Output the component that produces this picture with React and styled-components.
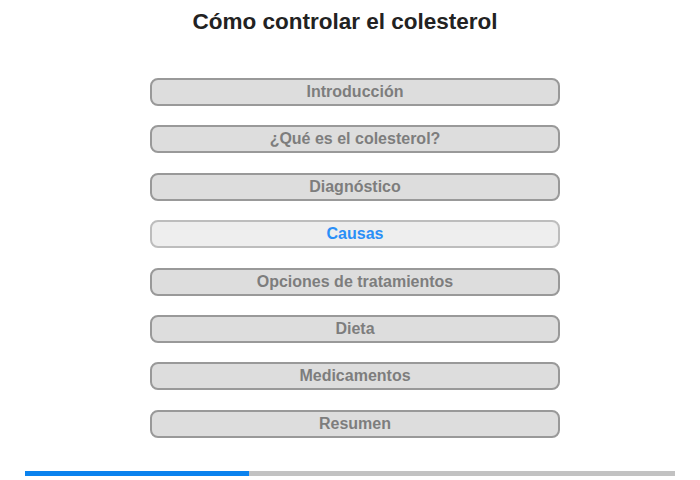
import React from "react";
import styled, { createGlobalStyle } from "styled-components";

const Global = createGlobalStyle`
  html, body { margin: 0; padding: 0; background: #fff; }
  body { font-family: "Liberation Sans", Arial, sans-serif; }
`;

const Page = styled.div`
  width: 700px;
  height: 480px;
  display: flex;
  flex-direction: column;
  box-sizing: border-box;
  padding-top: 9px;
`;

const Title = styled.h1`
  margin: 0;
  font-size: 22.5px;
  font-weight: bold;
  color: #222;
  text-align: center;
  line-height: 26px;
  padding-right: 10px;
`;

const Menu = styled.nav`
  display: flex;
  flex-direction: column;
  gap: 19.4px;
  margin-top: 43px;
  padding-left: 150px;
`;

const Item = styled.div`
  width: 410px;
  height: 28px;
  box-sizing: border-box;
  border: 2px solid ${(p) => (p.$active ? "#bdbdbd" : "#999")};
  background: ${(p) => (p.$active ? "#eeeeee" : "#dddddd")};
  border-radius: 8px;
  display: flex;
  align-items: center;
  justify-content: center;
  font-size: 16px;
  font-weight: bold;
  color: ${(p) => (p.$active ? "#2a8ff7" : "#7d7d7d")};
`;

const Progress = styled.div`
  margin: auto 25px 4px 25px;
  height: 5px;
  background: #c2c2c2;
  display: flex;
`;

const Fill = styled.div`
  height: 100%;
  background: #0a82ee;
`;

const items = [
  "Introducción",
  "¿Qué es el colesterol?",
  "Diagnóstico",
  "Causas",
  "Opciones de tratamientos",
  "Dieta",
  "Medicamentos",
  "Resumen",
];

export default function App() {
  return (
    <Page>
      <Global />
      <Title>Cómo controlar el colesterol</Title>
      <Menu>
        {items.map((t, i) => (
          <Item key={t} $active={i === 3}>
            {t}
          </Item>
        ))}
      </Menu>
      <Progress>
        <Fill style={{ width: `${(224 / 650) * 100}%` }} />
      </Progress>
    </Page>
  );
}
